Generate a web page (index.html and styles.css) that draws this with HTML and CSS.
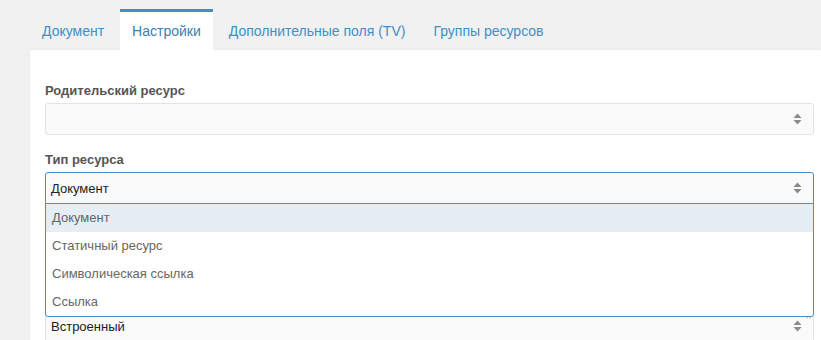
FILE: index.html
```html
<!DOCTYPE html>
<html lang="ru">
<head>
  <meta charset="UTF-8">
  <title>Ресурс</title>
  <link rel="stylesheet" href="styles.css">
</head>
<body>
  <ul class="tabs">
    <li class="tab">Документ</li>
    <li class="tab active">Настройки</li>
    <li class="tab">Дополнительные поля (TV)</li>
    <li class="tab">Группы ресурсов</li>
  </ul>

  <div class="panel">
    <div class="field">
      <label class="label">Родительский ресурс</label>
      <div class="select">
        <span class="value"></span>
        <svg class="arrows" width="9" height="12" viewBox="0 0 9 12"><path d="M4.5 0.5 L8.5 5 L0.5 5 Z M0.5 7 L8.5 7 L4.5 11.5 Z" fill="#8a8a8a"/></svg>
      </div>
    </div>

    <div class="field">
      <label class="label">Тип ресурса</label>
      <div class="select open">
        <span class="value">Документ</span>
        <svg class="arrows" width="9" height="12" viewBox="0 0 9 12"><path d="M4.5 0.5 L8.5 5 L0.5 5 Z M0.5 7 L8.5 7 L4.5 11.5 Z" fill="#8a8a8a"/></svg>
        <ul class="dropdown">
          <li class="option selected">Документ</li>
          <li class="option">Статичный ресурс</li>
          <li class="option">Символическая ссылка</li>
          <li class="option">Ссылка</li>
        </ul>
      </div>
    </div>

    <!-- spacer under the open list (content type field is covered) -->
    <div class="field covered"></div>

    <div class="field">
      <div class="select">
        <span class="value">Встроенный</span>
        <svg class="arrows" width="9" height="12" viewBox="0 0 9 12"><path d="M4.5 0.5 L8.5 5 L0.5 5 Z M0.5 7 L8.5 7 L4.5 11.5 Z" fill="#8a8a8a"/></svg>
        <svg class="grip" width="6" height="6" viewBox="0 0 6 6"><path d="M4.5 0 L6 0 L6 1.5 L4.5 1.5 Z M1.5 3 L3 3 L3 4.5 L1.5 4.5 Z M4.5 3 L6 3 L6 4.5 L4.5 4.5 Z" fill="#c4c4c4"/></svg>
      </div>
    </div>
  </div>
</body>
</html>
```

FILE: styles.css
```css
body { margin: 0; background: #f1f1f1; font-family: "Liberation Sans", Arial, sans-serif; overflow: hidden; height: 340px; }

.tabs { list-style: none; margin: 0; padding: 9px 0 0 30px; display: flex; gap: 4px; height: 41px; }
.tab { padding: 11px 12px 14px; font-size: 14px; line-height: 16px; color: #3f8fc6; border-top: 3px solid transparent; }
.tab.active { background: #fff; border-top-color: #3d8fc6; color: #3680b4; }

.panel { margin-left: 30px; background: #fff; padding: 33px 7px 0 15px; height: 257px; box-shadow: 0 0 3px rgba(0,0,0,0.06); }

.field { margin-bottom: 17px; }
.field.covered { height: 72px; }
.label { display: block; font-size: 13px; font-weight: bold; line-height: 16px; color: #555; margin-bottom: 4px; }

.select { position: relative; height: 30px; border: 1px solid #e4e4e4; border-radius: 3px; background: #fafafa; display: flex; align-items: center; padding: 0 5px; }
.select .value { font-size: 13px; color: #222; flex: 1; }
.select .arrows { margin-right: 6px; }
.select .grip { position: absolute; right: 2px; top: 3px; }
.select.open { border-color: #4b8fbf; border-radius: 3px 3px 0 0; }

.dropdown { position: absolute; left: -1px; right: -1px; top: 30px; margin: 0; padding: 0; list-style: none; background: #fff; border: 1px solid #4b8fbf; border-radius: 0 0 3px 3px; z-index: 2; }
.option { height: 28px; line-height: 28px; padding-left: 6px; font-size: 13px; color: #666; }
.option.selected { background: #e5edf5; }
```
